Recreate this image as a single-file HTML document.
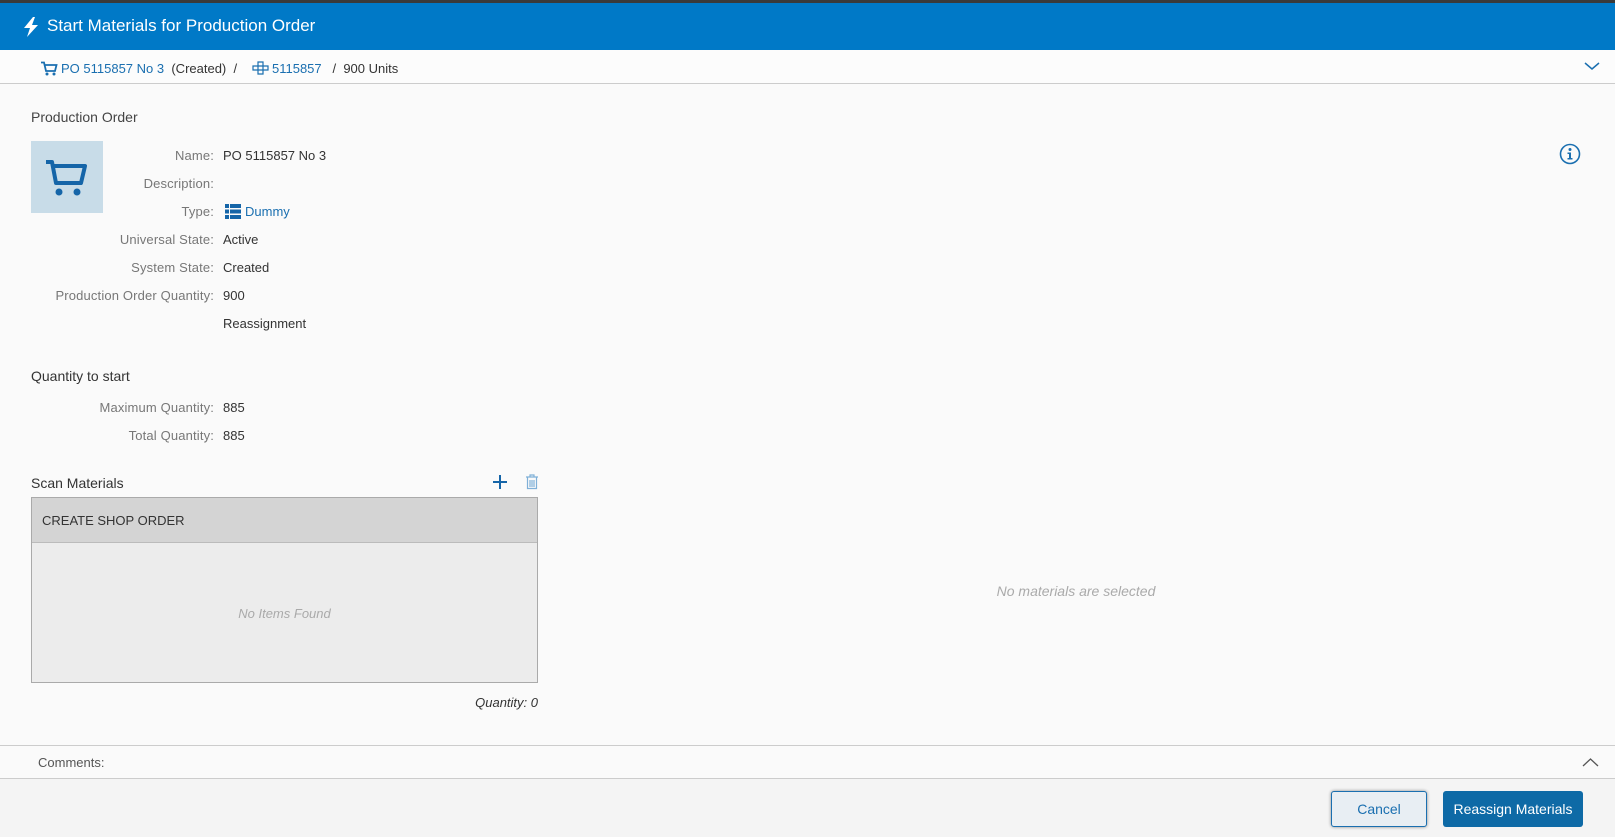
<!DOCTYPE html>
<html><head><style>
*{margin:0;padding:0;box-sizing:border-box}
body{width:1615px;height:837px;overflow:hidden;background:#fafafa;font-family:"Liberation Sans",sans-serif;color:#333;position:relative}
.a{position:absolute;white-space:nowrap}
.lbl{position:absolute;right:1401px;color:#777;font-size:13px;text-align:right;letter-spacing:0.15px}
.val{position:absolute;left:223px;font-size:13px;color:#333}
</style></head><body>
<div class="a" style="left:0;top:0;width:1615px;height:3px;background:#3a3a3a"></div>
<div class="a" style="left:0;top:3px;width:1615px;height:47px;background:#0079c7"></div>
<svg class="a" style="left:23px;top:17px" width="16" height="20" viewBox="0 0 16 20"><path d="M10 0 L1 11 H7 L4 20 L15 8 H9 L12 0Z" fill="#fff"/></svg>
<div class="a" style="left:47px;top:16px;color:#fff;font-size:17px">Start Materials for Production Order</div>
<div class="a" style="left:0;top:50px;width:1615px;height:34px;background:#fcfcfc;border-bottom:1px solid #ccc"></div>
<svg class="a" style="left:40px;top:61px" width="18" height="15" viewBox="0 0 18 15"><path d="M1 1.5H4L6 10H15L16.5 4H5" fill="none" stroke="#1a6fb0" stroke-width="1.8"/><circle cx="7" cy="13" r="1.5" fill="#1a6fb0"/><circle cx="14" cy="13" r="1.5" fill="#1a6fb0"/></svg>
<div class="a" style="left:61px;top:61px;font-size:13px"><span style="color:#1a6fb0">PO 5115857 No 3</span>&nbsp; (Created) &nbsp;/</div>
<svg class="a" style="left:252px;top:61px" width="17" height="14" viewBox="0 0 17 14"><path d="M6 1h5v4h5v4h-5v4H6V9H1V5h5z M6 5h5v4H6z" fill="none" stroke="#1a6fb0" stroke-width="1.2"/></svg>
<div class="a" style="left:272px;top:61px;font-size:13px"><span style="color:#1a6fb0">5115857</span> &nbsp;&nbsp;/ &nbsp;900 Units</div>
<svg class="a" style="left:1584px;top:62px" width="16" height="9" viewBox="0 0 16 9"><path d="M1 1l7 6 7-6" fill="none" stroke="#1a6fb0" stroke-width="1.5"/></svg>
<div class="a" style="left:31px;top:109px;font-size:14px;color:#444">Production Order</div>
<div class="a" style="left:31px;top:141px;width:72px;height:72px;background:#c8dce8"></div>
<svg class="a" style="left:45px;top:159px" width="44" height="38" viewBox="0 0 44 38"><path d="M1 3H7L11 24H36L40 7H9" fill="none" stroke="#1565a8" stroke-width="4" stroke-linejoin="round"/><circle cx="14" cy="33" r="3.5" fill="#1565a8"/><circle cx="32" cy="33" r="3.5" fill="#1565a8"/></svg>
<svg class="a" style="left:1559px;top:143px" width="22" height="22" viewBox="0 0 22 22"><circle cx="11" cy="11" r="9.5" fill="none" stroke="#1a6fb0" stroke-width="1.6"/><circle cx="11" cy="6.5" r="1.5" fill="#1a6fb0"/><path d="M8.5 9.5H12V15H13.5V16.5H8.5V15H10V11H8.5Z" fill="#1a6fb0"/></svg>
<div class="lbl" style="top:148px">Name:</div><div class="val" style="top:148px">PO 5115857 No 3</div>
<div class="lbl" style="top:176px">Description:</div>
<div class="lbl" style="top:204px">Type:</div>
<svg class="a" style="left:225px;top:204px" width="16" height="15" viewBox="0 0 16 15"><rect x="0" y="0" width="4" height="4" fill="#1565a8"/><rect x="5" y="0" width="11" height="4" fill="#1565a8"/><rect x="0" y="5.5" width="4" height="4" fill="#1565a8"/><rect x="5" y="5.5" width="11" height="4" fill="#1565a8"/><rect x="0" y="11" width="4" height="4" fill="#1565a8"/><rect x="5" y="11" width="11" height="4" fill="#1565a8"/></svg>
<div class="val" style="top:204px;left:245px;color:#1a6fb0">Dummy</div>
<div class="lbl" style="top:232px">Universal State:</div><div class="val" style="top:232px">Active</div>
<div class="lbl" style="top:260px">System State:</div><div class="val" style="top:260px">Created</div>
<div class="lbl" style="top:288px">Production Order Quantity:</div><div class="val" style="top:288px">900</div>
<div class="val" style="top:316px">Reassignment</div>
<div class="a" style="left:31px;top:368px;font-size:14px;color:#333">Quantity to start</div>
<div class="lbl" style="top:400px">Maximum Quantity:</div><div class="val" style="top:400px">885</div>
<div class="lbl" style="top:428px">Total Quantity:</div><div class="val" style="top:428px">885</div>
<div class="a" style="left:31px;top:475px;font-size:14px;color:#333">Scan Materials</div>
<svg class="a" style="left:492px;top:474px" width="16" height="16" viewBox="0 0 16 16"><path d="M8 1v14M1 8h14" stroke="#1565a8" stroke-width="2"/></svg>
<svg class="a" style="left:525px;top:474px" width="14" height="16" viewBox="0 0 14 16"><path d="M1 3h12M5 3V1h4v2M2.5 3.5v11h9v-11M5 6v7M7 6v7M9 6v7" fill="none" stroke="#7fb0d8" stroke-width="1.2"/></svg>
<div class="a" style="left:31px;top:497px;width:507px;height:186px;border:1px solid #aaa;background:#ececec"></div>
<div class="a" style="left:32px;top:498px;width:505px;height:45px;background:#d4d4d4;border-bottom:1px solid #bbb"></div>
<div class="a" style="left:42px;top:513px;font-size:13px;color:#333">CREATE SHOP ORDER</div>
<div class="a" style="left:31px;top:606px;width:507px;text-align:center;font-size:13px;font-style:italic;color:#aaa">No Items Found</div>
<div class="a" style="right:1077px;top:695px;font-size:13px;font-style:italic;color:#333">Quantity: 0</div>
<div class="a" style="left:0;top:583px;width:2152px;text-align:center;font-size:14px;font-style:italic;color:#aaa">No materials are selected</div>
<div class="a" style="left:0;top:745px;width:1615px;height:34px;border-top:1px solid #ccc;border-bottom:1px solid #ccc;background:#fafafa"></div>
<div class="a" style="left:38px;top:755px;font-size:13px;color:#555">Comments:</div>
<svg class="a" style="left:1582px;top:757px" width="17" height="10" viewBox="0 0 17 10"><path d="M1 9l7.5-7 7.5 7" fill="none" stroke="#555" stroke-width="1.3"/></svg>
<div class="a" style="left:0;top:779px;width:1615px;height:58px;background:#f4f4f4"></div>
<div class="a" style="left:1331px;top:791px;width:96px;height:36px;border:1px solid #1a6fb0;border-radius:3px;background:#e8eef3;box-shadow:0 0 3px #888;color:#1a6fb0;font-size:14px;text-align:center;line-height:34px">Cancel</div>
<div class="a" style="left:1443px;top:791px;width:140px;height:36px;border-radius:3px;background:#0e6aa6;color:#fff;font-size:14px;text-align:center;line-height:36px">Reassign Materials</div>
</body></html>
